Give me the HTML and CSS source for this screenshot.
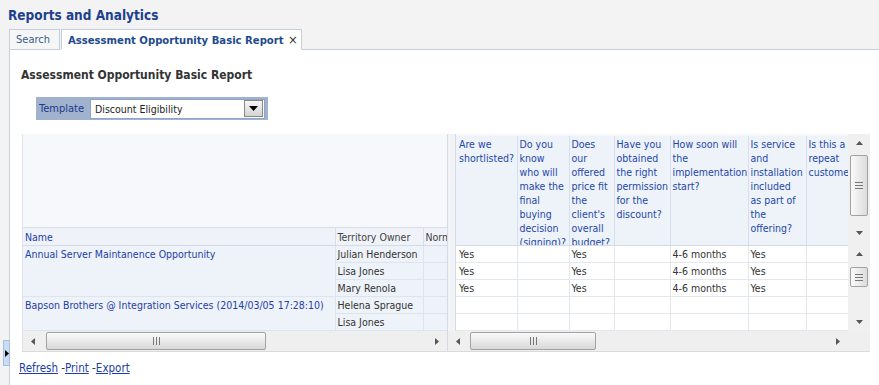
FILE: index.html
```html
<!DOCTYPE html>
<html lang="en">

<head>
    <meta charset="UTF-8">
    <title>Reports and Analytics</title>
    <link rel="stylesheet" href="styles.css">
</head>

<body>

<div class="app-title">Reports and Analytics</div>

<div class="tabs">
    <div class="tab">Search</div>
    <div class="tab tab-active">Assessment Opportunity Basic Report <span class="tab-close">&times;</span></div>
    <div class="tab-fill"></div>
</div>

<div class="panel">
    <div class="report-title">Assessment Opportunity Basic Report</div>

    <div class="template-bar">
        <span class="template-label">Template</span>
        <div class="select">
            <span class="select-text">Discount Eligibility</span>
            <span class="select-btn">
                <svg width="9" height="5" viewBox="0 0 9 5"><path d="M0 0H9L4.5 5Z" fill="#000"/></svg>
            </span>
        </div>
    </div>

    <div class="report-grid">
        <!-- frozen columns header -->
        <div class="frozen-head">
            <div class="frozen-head-space"></div>
            <table class="frozen-table">
                <colgroup><col class="c-name"><col class="c-owner"><col class="c-norm"></colgroup>
                <tr>
                    <th class="link-head">Name</th>
                    <th>Territory Owner</th>
                    <th>Norm</th>
                </tr>
            </table>
        </div>

        <div class="splitter"></div>

        <!-- scrolling columns header -->
        <div class="scroll-head">
            <table class="scroll-table">
                <colgroup><col class="c1"><col class="c2"><col class="c3"><col class="c4"><col class="c5"><col class="c6"><col class="c7"></colgroup>
                <tr>
                    <th>Are we shortlisted?</th>
                    <th>Do you know who will make the final buying decision (signing)?</th>
                    <th>Does our offered price fit the client's overall budget?</th>
                    <th>Have you obtained the right permission for the discount?</th>
                    <th>How soon will the implementation start?</th>
                    <th>Is service and installation included as part of the offering?</th>
                    <th>Is this a repeat customer?</th>
                </tr>
            </table>
        </div>

        <div class="vscroll vscroll-head">
            <div class="sb-btn"><svg width="7" height="4" viewBox="0 0 7 4"><path d="M0 4H7L3.5 0Z" fill="#555"/></svg></div>
            <div class="vthumb vthumb-head"><svg width="8" height="7" viewBox="0 0 8 7"><path d="M0 .5H8M0 3.5H8M0 6.5H8" stroke="#777"/></svg></div>
            <div class="sb-space"></div>
            <div class="sb-btn"><svg width="7" height="4" viewBox="0 0 7 4"><path d="M0 0H7L3.5 4Z" fill="#555"/></svg></div>
        </div>

        <!-- frozen columns body -->
        <div class="frozen-body">
            <table class="frozen-table">
                <colgroup><col class="c-name"><col class="c-owner"><col class="c-norm"></colgroup>
                <tr><td rowspan="3" class="name-cell">Annual Server Maintanence Opportunity</td><td>Julian Henderson</td><td></td></tr>
                <tr><td>Lisa Jones</td><td></td></tr>
                <tr><td>Mary Renola</td><td></td></tr>
                <tr><td rowspan="2" class="name-cell">Bapson Brothers @ Integration Services (2014/03/05 17:28:10)</td><td>Helena Sprague</td><td></td></tr>
                <tr><td>Lisa Jones</td><td></td></tr>
            </table>
        </div>

        <!-- scrolling columns body -->
        <div class="scroll-body">
            <table class="scroll-table">
                <colgroup><col class="c1"><col class="c2"><col class="c3"><col class="c4"><col class="c5"><col class="c6"><col class="c7"></colgroup>
                <tr><td>Yes</td><td></td><td>Yes</td><td></td><td>4-6 months</td><td>Yes</td><td></td></tr>
                <tr><td>Yes</td><td></td><td>Yes</td><td></td><td>4-6 months</td><td>Yes</td><td></td></tr>
                <tr><td>Yes</td><td></td><td>Yes</td><td></td><td>4-6 months</td><td>Yes</td><td></td></tr>
                <tr><td></td><td></td><td></td><td></td><td></td><td></td><td></td></tr>
                <tr><td></td><td></td><td></td><td></td><td></td><td></td><td></td></tr>
            </table>
        </div>

        <div class="vscroll vscroll-body">
            <div class="sb-btn"><svg width="7" height="4" viewBox="0 0 7 4"><path d="M0 4H7L3.5 0Z" fill="#555"/></svg></div>
            <div class="vthumb vthumb-body"><svg width="8" height="7" viewBox="0 0 8 7"><path d="M0 .5H8M0 3.5H8M0 6.5H8" stroke="#777"/></svg></div>
            <div class="sb-space"></div>
            <div class="sb-btn"><svg width="7" height="4" viewBox="0 0 7 4"><path d="M0 0H7L3.5 4Z" fill="#555"/></svg></div>
        </div>

        <!-- horizontal scrollbars -->
        <div class="hscroll hscroll-left">
            <div class="sb-btn"><svg width="4" height="7" viewBox="0 0 4 7"><path d="M4 0V7L0 3.5Z" fill="#555"/></svg></div>
            <div class="hthumb hthumb-left"><svg width="7" height="8" viewBox="0 0 7 8"><path d="M.5 0V8M3.5 0V8M6.5 0V8" stroke="#777"/></svg></div>
            <div class="sb-space"></div>
            <div class="sb-btn"><svg width="4" height="7" viewBox="0 0 4 7"><path d="M0 0V7L4 3.5Z" fill="#555"/></svg></div>
        </div>

        <div class="hscroll hscroll-right">
            <div class="sb-btn"><svg width="4" height="7" viewBox="0 0 4 7"><path d="M4 0V7L0 3.5Z" fill="#555"/></svg></div>
            <div class="hthumb hthumb-right"><svg width="7" height="8" viewBox="0 0 7 8"><path d="M.5 0V8M3.5 0V8M6.5 0V8" stroke="#777"/></svg></div>
            <div class="sb-space"></div>
            <div class="sb-btn"><svg width="4" height="7" viewBox="0 0 4 7"><path d="M0 0V7L4 3.5Z" fill="#555"/></svg></div>
        </div>

        <div class="sb-corner"></div>
    </div>

    <div class="links">
        <a href="#">Refresh</a> -<a href="#">Print</a> -<a href="#">Export</a>
    </div>
</div>

<div class="side-handle">
    <svg width="4" height="7" viewBox="0 0 4 7"><path d="M0 0V7L4 3.5Z" fill="#000"/></svg>
</div>

</body>
</html>
```

FILE: styles.css
```css
body {
    margin: 0;
    background-color: #f3f3f3;
    font-family: "DejaVu Sans Condensed", Tahoma, "DejaVu Sans", sans-serif;
    font-size: 10.5px;
    color: #333;
    height: 385px;
    overflow: hidden;
}

.app-title {
    padding: 7px 0 0 8px;
    height: 22px;
    font-size: 13.5px;
    font-weight: bold;
    color: #203f8f;
}

.tabs {
    display: flex;
    height: 21px;
    margin-left: 9px;
}

.tab {
    border: 1px solid #c6ced9;
    background-color: #f6f6f6;
    padding: 0 9px 0 6px;
    line-height: 19px;
    font-size: 11px;
    color: #3a5a8c;
}

.tab-active {
    margin-left: 1px;
    padding-right: 3px;
    background-color: #fff;
    border-bottom-color: #fff;
    font-size: 11.2px;
    font-weight: bold;
    color: #1e4b8c;
}

.tab-close {
    margin-left: 1px;
    font-weight: normal;
    color: #333;
    font-size: 13px;
}

.tab-fill {
    flex: 1;
    border-bottom: 1px solid #c6ced9;
}

.panel {
    margin-left: 9px;
    height: 335px;
    background-color: #fff;
    border-left: 1px solid #c6ced9;
    overflow: hidden;
}

.report-title {
    margin: 17px 0 0 11px;
    font-size: 12px;
    font-weight: bold;
    line-height: 16px;
    color: #333;
}

.template-bar {
    display: flex;
    align-items: center;
    width: 232px;
    height: 23px;
    margin: 14px 0 0 26px;
    background-color: #a1b2cf;
}

.template-label {
    width: 51px;
    padding-left: 3px;
    color: #1b3a8a;
    font-size: 11px;
}

.select {
    display: flex;
    align-items: center;
    width: 173px;
    height: 18px;
    background-color: #fff;
    border: 1px solid #8ea4c4;
}

.select-text {
    flex: 1;
    padding-left: 4px;
    font-size: 10.5px;
    color: #222;
}

.select-btn {
    display: flex;
    align-items: center;
    justify-content: center;
    width: 17px;
    height: 15px;
    margin-right: 1px;
    border: 1px solid #888;
    background: linear-gradient(#f6f6f6, #d4d4d4);
}

.report-grid {
    display: grid;
    grid-template-columns: 425px 9px 392px 22px;
    grid-template-rows: 111px 86px 21px;
    margin: 14px 0 0 12px;
    width: 848px;
}

table {
    border-collapse: collapse;
    table-layout: fixed;
}

.c-name { width: 312px; }
.c-owner { width: 88px; }
.c-norm { width: 60px; }

.c1 { width: 61px; }
.c2 { width: 52px; }
.c3 { width: 45px; }
.c4 { width: 56px; }
.c5 { width: 78px; }
.c6 { width: 58px; }
.c7 { width: 70px; }

.frozen-head {
    grid-column: 1;
    grid-row: 1;
    display: flex;
    flex-direction: column;
    background-color: #f6f8fb;
    border-left: 1px solid #dfe4ec;
    overflow: hidden;
}

.frozen-head-space {
    flex: 1;
}

.frozen-table {
    width: 460px;
    flex: none;
}

.frozen-table th {
    height: 17px;
    padding: 0 2px;
    text-align: left;
    font-weight: normal;
    white-space: nowrap;
    overflow: hidden;
    border-top: 1px solid #d8dfe9;
    border-right: 1px solid #d8dfe9;
    color: #444;
    background-color: #eff3f9;
}

.frozen-table th.link-head {
    color: #1f40a8;
}

.frozen-body {
    grid-column: 1;
    grid-row: 2;
    overflow: hidden;
    background-color: #eef2f9;
    border-left: 1px solid #dfe4ec;
    border-top: 1px solid #d3dbe6;
}

.frozen-table td {
    height: 16px;
    padding: 0 2px;
    white-space: nowrap;
    overflow: hidden;
    vertical-align: top;
    line-height: 16px;
    border-bottom: 1px solid #dde4ee;
    border-right: 1px solid #dde4ee;
    color: #333;
}

.frozen-table td.name-cell {
    color: #1f40a8;
}

.splitter {
    grid-column: 2;
    grid-row: 1 / 3;
    background-color: #f1f3f6;
    border-left: 1px solid #d3dbe6;
    border-right: 1px solid #d3dbe6;
}

.scroll-head {
    grid-column: 3;
    grid-row: 1;
    overflow: hidden;
    background-color: #eef3fa;
    border-top: 2px solid #f6f8fb;
}

.scroll-table {
    width: 420px;
}

.scroll-table th {
    height: 107px;
    padding: 1px 4px 0 2px;
    text-align: left;
    vertical-align: top;
    font-weight: normal;
    line-height: 14px;
    color: #1f47a8;
    border-right: 1px solid #d6dfec;
    overflow: hidden;
}

.scroll-table th:first-child {
    padding: 1px 3px 0;
}

.scroll-body {
    grid-column: 3;
    grid-row: 2;
    overflow: hidden;
    border-top: 1px solid #d3dbe6;
}

.scroll-table td {
    height: 16px;
    padding: 0 2px;
    white-space: nowrap;
    line-height: 16px;
    border-bottom: 1px solid #e3e8ef;
    border-right: 1px solid #e3e8ef;
    color: #333;
}

.scroll-table td:first-child {
    padding-left: 3px;
}

.vscroll {
    grid-column: 4;
    display: flex;
    flex-direction: column;
    align-items: center;
    background-color: #f0f0f0;
}

.vscroll-head {
    grid-row: 1;
    padding-bottom: 3px;
}

.vscroll-body {
    grid-row: 2;
}

.sb-btn {
    display: flex;
    align-items: center;
    justify-content: center;
    width: 20px;
    height: 18px;
    flex: none;
}

.sb-space {
    flex: 1;
}

.vthumb {
    display: flex;
    align-items: center;
    justify-content: center;
    width: 18px;
    border: 1px solid #a2a2a2;
    border-radius: 2px;
    background: linear-gradient(90deg, #fafafa, #dcdcdc);
    box-sizing: border-box;
}

.vthumb-head {
    margin-top: 3px;
    height: 61px;
}

.vthumb-body {
    margin-top: 4px;
    height: 20px;
}

.hscroll {
    grid-row: 3;
    display: flex;
    align-items: center;
    background-color: #efefef;
    border-bottom: 1px solid #dadada;
}

.hscroll .sb-btn {
    height: 20px;
}

.hscroll-left {
    grid-column: 1;
    border-left: 1px solid #dfe4ec;
}

.hscroll-right {
    grid-column: 2 / 4;
    border-left: 1px solid #d3dbe6;
}

.hthumb {
    display: flex;
    align-items: center;
    justify-content: center;
    height: 18px;
    border: 1px solid #a2a2a2;
    border-radius: 2px;
    background: linear-gradient(#fafafa, #d8d8d8);
    box-sizing: border-box;
}

.hthumb-left {
    margin-left: 3px;
    width: 220px;
}

.hthumb-right {
    margin-left: 2px;
    width: 126px;
}

.sb-corner {
    grid-column: 4;
    grid-row: 3;
    background-color: #efefef;
    border-bottom: 1px solid #dadada;
}

.links {
    margin: 9px 0 0 9px;
    font-size: 11.5px;
    line-height: 14px;
    color: #333;
}

.links a {
    color: #1c3ea8;
}

.side-handle {
    position: absolute;
    left: 3px;
    top: 340px;
    width: 5px;
    height: 24px;
    display: flex;
    align-items: center;
    justify-content: center;
    background-color: #c9dcf2;
    border: 1px solid #a3bfe3;
}
```
